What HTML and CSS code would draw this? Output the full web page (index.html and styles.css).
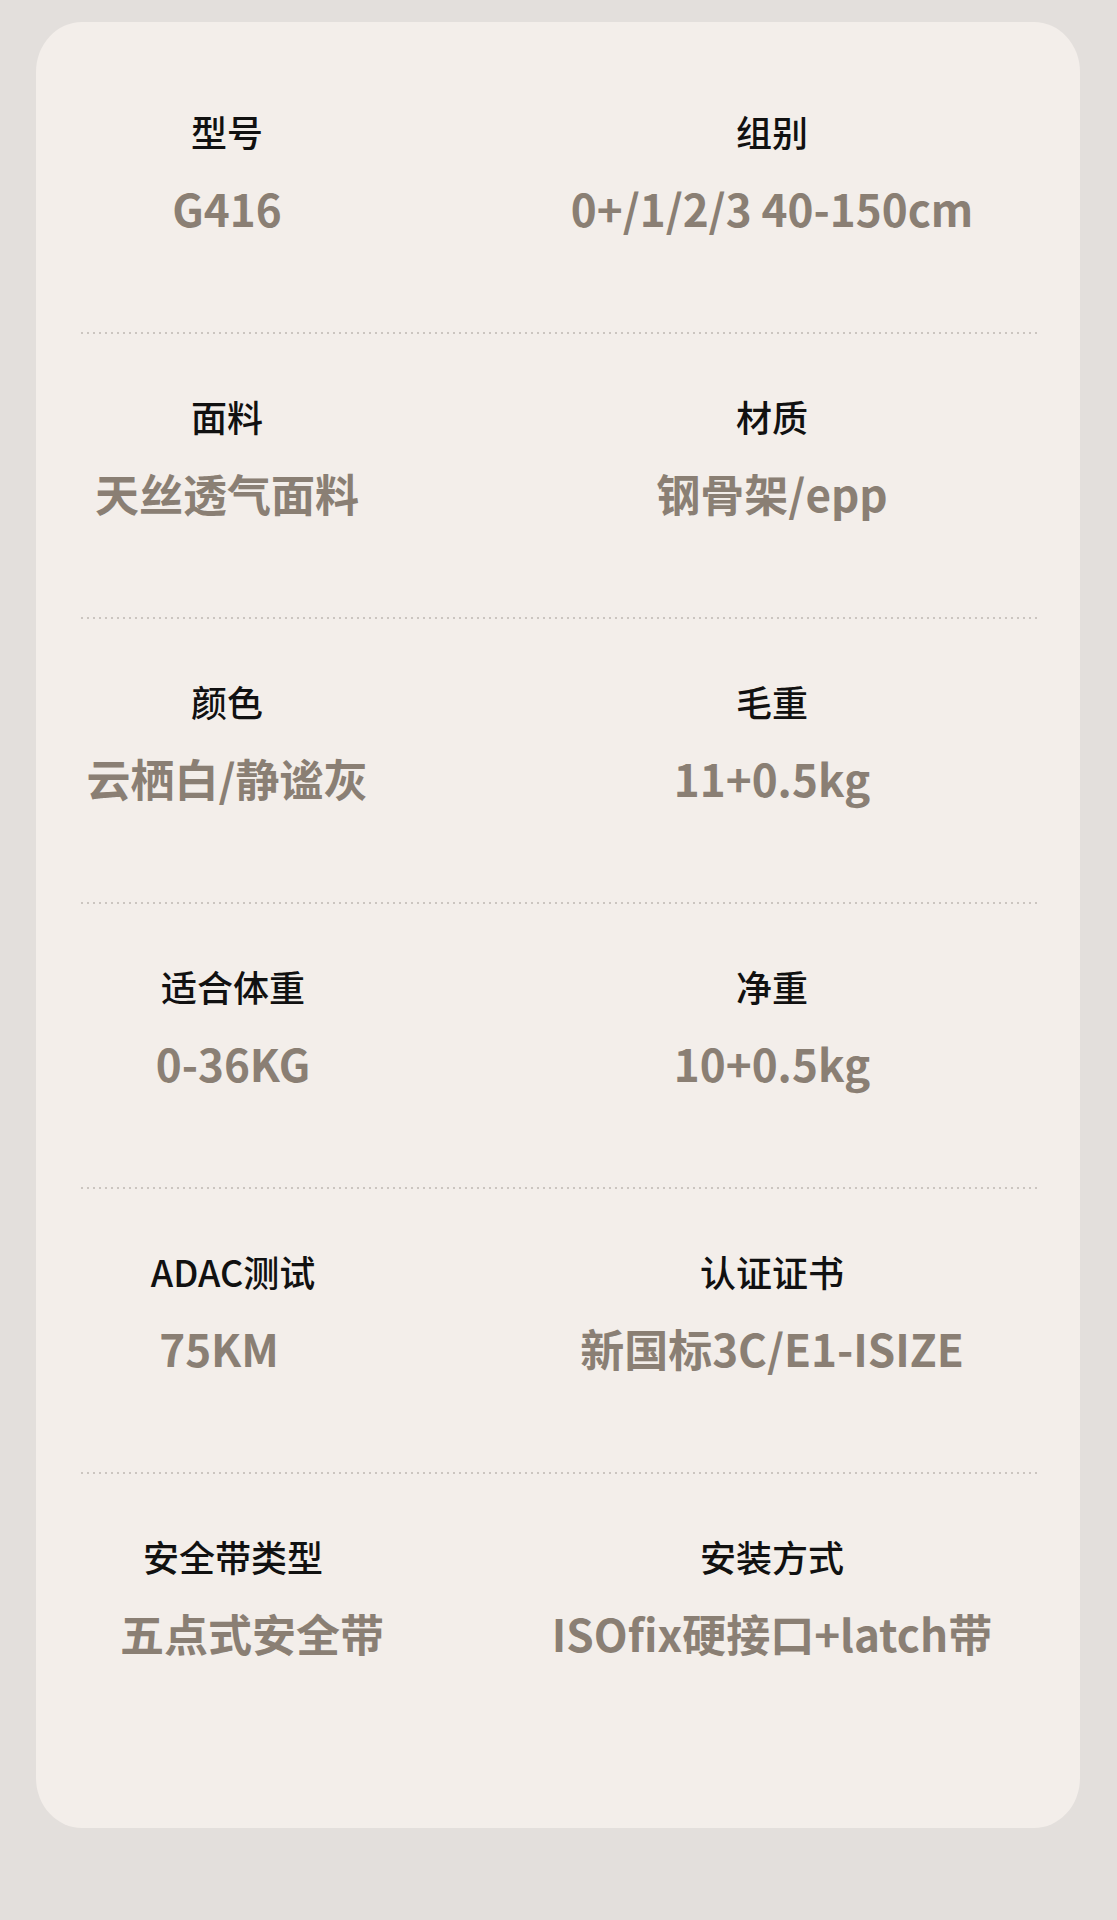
FILE: index.html
```html
<!DOCTYPE html>
<html lang="zh-CN">
<head>
    <meta charset="UTF-8">
    <title>产品参数</title>
    <link rel="stylesheet" href="styles.css">
</head>
<body>
    <div class="card">
        <div class="row">
            <div class="cell">
                <p class="label">型号</p>
                <p class="value">G416</p>
            </div>
            <div class="cell">
                <p class="label">组别</p>
                <p class="value">0+/1/2/3 40-150cm</p>
            </div>
        </div>
        <div class="line"></div>
        <div class="row">
            <div class="cell">
                <p class="label">面料</p>
                <p class="value">天丝透气面料</p>
            </div>
            <div class="cell">
                <p class="label">材质</p>
                <p class="value">钢骨架/epp</p>
            </div>
        </div>
        <div class="line"></div>
        <div class="row">
            <div class="cell">
                <p class="label">颜色</p>
                <p class="value">云栖白/静谧灰</p>
            </div>
            <div class="cell">
                <p class="label">毛重</p>
                <p class="value">11+0.5kg</p>
            </div>
        </div>
        <div class="line"></div>
        <div class="row">
            <div class="cell shift">
                <p class="label">适合体重</p>
                <p class="value">0-36KG</p>
            </div>
            <div class="cell">
                <p class="label">净重</p>
                <p class="value">10+0.5kg</p>
            </div>
        </div>
        <div class="line"></div>
        <div class="row">
            <div class="cell shift">
                <p class="label">ADAC测试</p>
                <p class="value left">75KM</p>
            </div>
            <div class="cell">
                <p class="label">认证证书</p>
                <p class="value">新国标3C/E1-ISIZE</p>
            </div>
        </div>
        <div class="line"></div>
        <div class="row">
            <div class="cell shift">
                <p class="label">安全带类型</p>
                <p class="value right">五点式安全带</p>
            </div>
            <div class="cell">
                <p class="label">安装方式</p>
                <p class="value">ISOfix硬接口+latch带</p>
            </div>
        </div>
    </div>
</body>
</html>
```

FILE: styles.css
```css
*{margin:0;padding:0;box-sizing:border-box;}
html,body{width:100%;height:100%;}
body{
    background:#e3dfdc;
    font-family:"Noto Sans CJK SC","Noto Sans",sans-serif;
}
.card{
    width:1044px;
    height:1806px;
    margin:22px 0 0 36px;
    padding:85px 40px 0 45px;
    background:#f3eeea;
    border-radius:46px / 50px;
}
.row{
    display:grid;
    grid-template-columns:292px 536px;
    column-gap:131px;
}
.cell{text-align:center;}
.cell.shift{padding-left:12px;}
.label{
    font-size:36px;
    line-height:48px;
    font-weight:500;
    color:#111;
}
.value{
    margin-top:25px;
    font-size:44px;
    line-height:56px;
    font-weight:700;
    color:#8a7f74;
    white-space:nowrap;
}
.value.left{padding-right:28px;}
.value.right{padding-left:27px;}
.line{
    height:2px;
    margin:96px 0 58px;
    background:linear-gradient(to right,#cbc5c0 2px,transparent 2px) 0 0/6px 2px repeat-x;
}
```
